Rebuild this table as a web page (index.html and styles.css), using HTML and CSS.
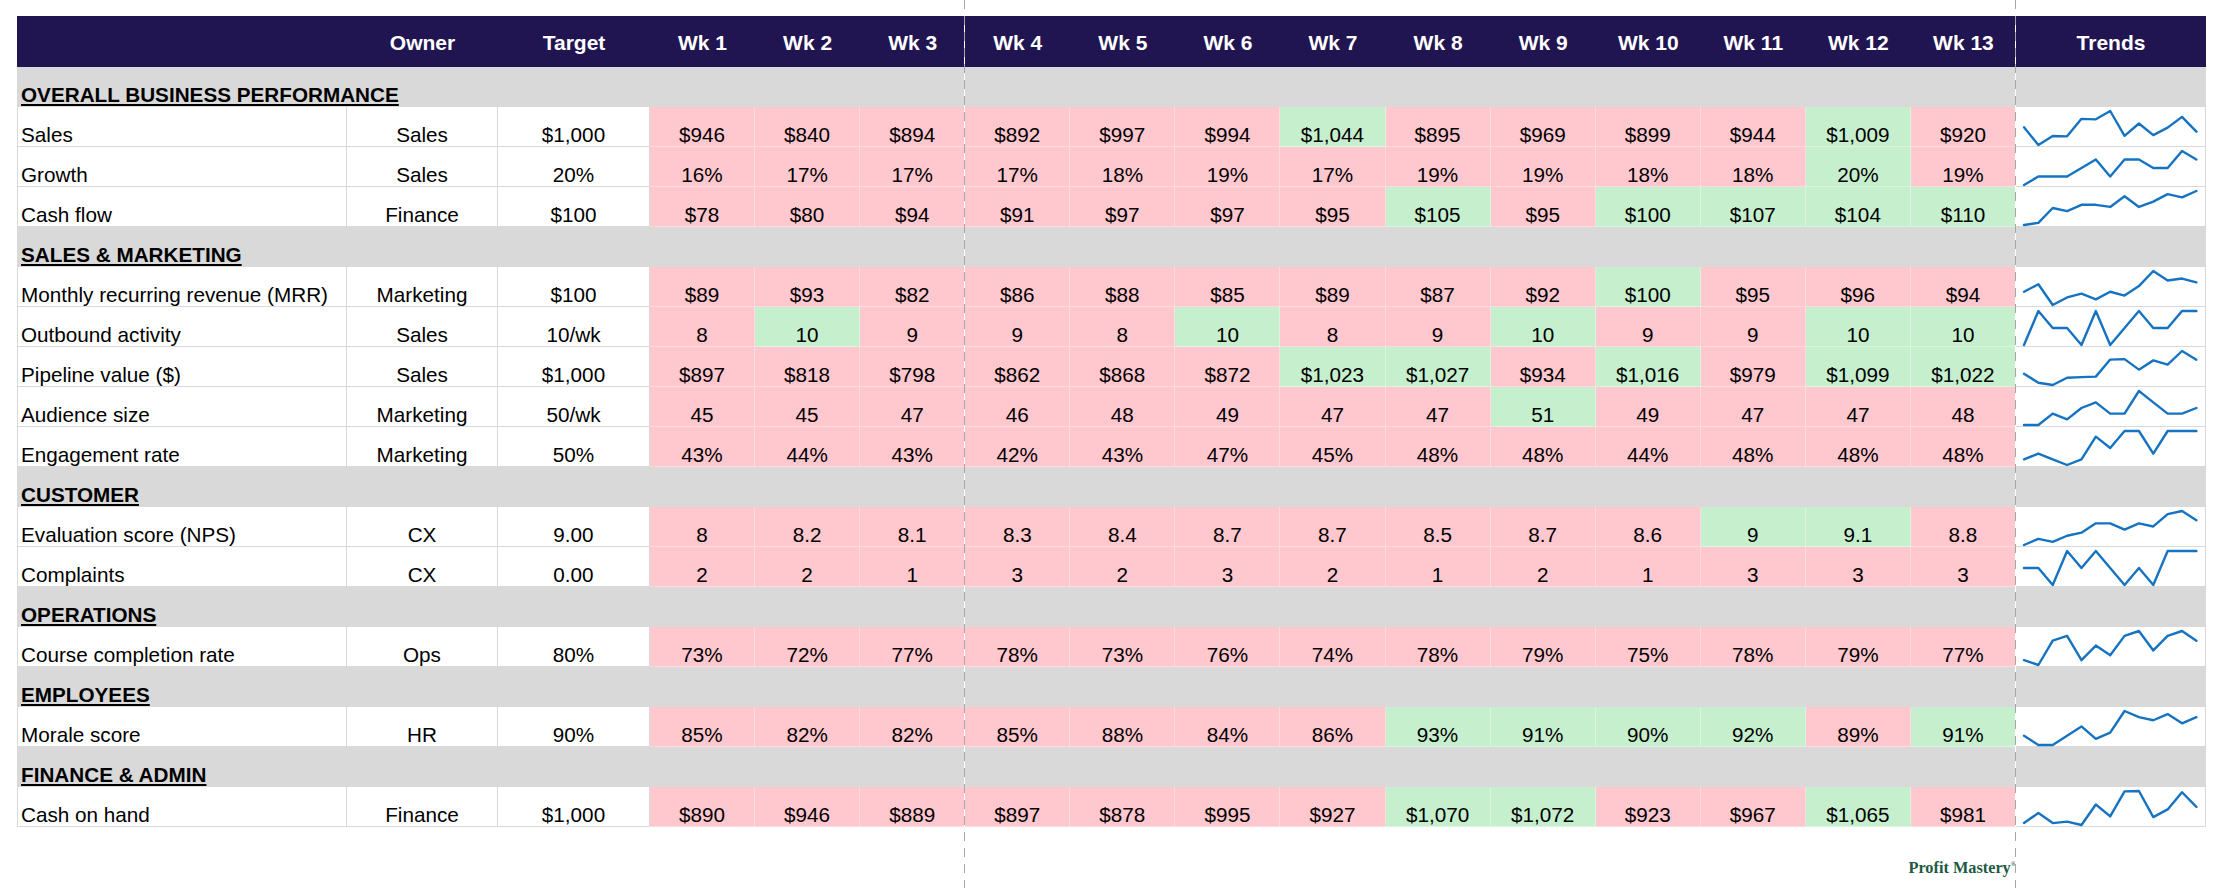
FILE: index.html
```html
<!DOCTYPE html>
<html lang="en">
<head>
<meta charset="utf-8">
<title>Weekly KPI Scorecard</title>
<link rel="stylesheet" href="styles.css">
</head>
<body>
<div class="page">
  <div class="sheet">
    <div class="row head">
      <div class="h"></div><div class="h">Owner</div><div class="h">Target</div>
      <div class="h">Wk 1</div><div class="h">Wk 2</div><div class="h">Wk 3</div><div class="h">Wk 4</div><div class="h">Wk 5</div><div class="h">Wk 6</div><div class="h">Wk 7</div><div class="h">Wk 8</div><div class="h">Wk 9</div><div class="h">Wk 10</div><div class="h">Wk 11</div><div class="h">Wk 12</div><div class="h">Wk 13</div>
      <div class="h">Trends</div>
    </div>

    <div class="section"><span class="section-title">OVERALL BUSINESS PERFORMANCE</span></div>
    <div class="row">
      <div class="c label">Sales</div><div class="c">Sales</div><div class="c">$1,000</div>
      <div class="c bad">$946</div><div class="c bad">$840</div><div class="c bad">$894</div><div class="c bad">$892</div><div class="c bad">$997</div><div class="c bad">$994</div><div class="c good">$1,044</div><div class="c bad">$895</div><div class="c bad">$969</div><div class="c bad">$899</div><div class="c bad">$944</div><div class="c good">$1,009</div><div class="c bad">$920</div>
      <div class="c trend"><svg class="spark" viewBox="0 -1044 12 204" preserveAspectRatio="none"><polyline points="0,-946 1,-840 2,-894 3,-892 4,-997 5,-994 6,-1044 7,-895 8,-969 9,-899 10,-944 11,-1009 12,-920"/></svg></div>
    </div>
    <div class="row">
      <div class="c label">Growth</div><div class="c">Sales</div><div class="c">20%</div>
      <div class="c bad">16%</div><div class="c bad">17%</div><div class="c bad">17%</div><div class="c bad">17%</div><div class="c bad">18%</div><div class="c bad">19%</div><div class="c bad">17%</div><div class="c bad">19%</div><div class="c bad">19%</div><div class="c bad">18%</div><div class="c bad">18%</div><div class="c good">20%</div><div class="c bad">19%</div>
      <div class="c trend"><svg class="spark" viewBox="0 -20 12 4" preserveAspectRatio="none"><polyline points="0,-16 1,-17 2,-17 3,-17 4,-18 5,-19 6,-17 7,-19 8,-19 9,-18 10,-18 11,-20 12,-19"/></svg></div>
    </div>
    <div class="row">
      <div class="c label">Cash flow</div><div class="c">Finance</div><div class="c">$100</div>
      <div class="c bad">$78</div><div class="c bad">$80</div><div class="c bad">$94</div><div class="c bad">$91</div><div class="c bad">$97</div><div class="c bad">$97</div><div class="c bad">$95</div><div class="c good">$105</div><div class="c bad">$95</div><div class="c good">$100</div><div class="c good">$107</div><div class="c good">$104</div><div class="c good">$110</div>
      <div class="c trend"><svg class="spark" viewBox="0 -110 12 32" preserveAspectRatio="none"><polyline points="0,-78 1,-80 2,-94 3,-91 4,-97 5,-97 6,-95 7,-105 8,-95 9,-100 10,-107 11,-104 12,-110"/></svg></div>
    </div>

    <div class="section"><span class="section-title">SALES &amp; MARKETING</span></div>
    <div class="row">
      <div class="c label">Monthly recurring revenue (MRR)</div><div class="c">Marketing</div><div class="c">$100</div>
      <div class="c bad">$89</div><div class="c bad">$93</div><div class="c bad">$82</div><div class="c bad">$86</div><div class="c bad">$88</div><div class="c bad">$85</div><div class="c bad">$89</div><div class="c bad">$87</div><div class="c bad">$92</div><div class="c good">$100</div><div class="c bad">$95</div><div class="c bad">$96</div><div class="c bad">$94</div>
      <div class="c trend"><svg class="spark" viewBox="0 -100 12 18" preserveAspectRatio="none"><polyline points="0,-89 1,-93 2,-82 3,-86 4,-88 5,-85 6,-89 7,-87 8,-92 9,-100 10,-95 11,-96 12,-94"/></svg></div>
    </div>
    <div class="row">
      <div class="c label">Outbound activity</div><div class="c">Sales</div><div class="c">10/wk</div>
      <div class="c bad">8</div><div class="c good">10</div><div class="c bad">9</div><div class="c bad">9</div><div class="c bad">8</div><div class="c good">10</div><div class="c bad">8</div><div class="c bad">9</div><div class="c good">10</div><div class="c bad">9</div><div class="c bad">9</div><div class="c good">10</div><div class="c good">10</div>
      <div class="c trend"><svg class="spark" viewBox="0 -10 12 2" preserveAspectRatio="none"><polyline points="0,-8 1,-10 2,-9 3,-9 4,-8 5,-10 6,-8 7,-9 8,-10 9,-9 10,-9 11,-10 12,-10"/></svg></div>
    </div>
    <div class="row">
      <div class="c label">Pipeline value ($)</div><div class="c">Sales</div><div class="c">$1,000</div>
      <div class="c bad">$897</div><div class="c bad">$818</div><div class="c bad">$798</div><div class="c bad">$862</div><div class="c bad">$868</div><div class="c bad">$872</div><div class="c good">$1,023</div><div class="c good">$1,027</div><div class="c bad">$934</div><div class="c good">$1,016</div><div class="c bad">$979</div><div class="c good">$1,099</div><div class="c good">$1,022</div>
      <div class="c trend"><svg class="spark" viewBox="0 -1099 12 301" preserveAspectRatio="none"><polyline points="0,-897 1,-818 2,-798 3,-862 4,-868 5,-872 6,-1023 7,-1027 8,-934 9,-1016 10,-979 11,-1099 12,-1022"/></svg></div>
    </div>
    <div class="row">
      <div class="c label">Audience size</div><div class="c">Marketing</div><div class="c">50/wk</div>
      <div class="c bad">45</div><div class="c bad">45</div><div class="c bad">47</div><div class="c bad">46</div><div class="c bad">48</div><div class="c bad">49</div><div class="c bad">47</div><div class="c bad">47</div><div class="c good">51</div><div class="c bad">49</div><div class="c bad">47</div><div class="c bad">47</div><div class="c bad">48</div>
      <div class="c trend"><svg class="spark" viewBox="0 -51 12 6" preserveAspectRatio="none"><polyline points="0,-45 1,-45 2,-47 3,-46 4,-48 5,-49 6,-47 7,-47 8,-51 9,-49 10,-47 11,-47 12,-48"/></svg></div>
    </div>
    <div class="row">
      <div class="c label">Engagement rate</div><div class="c">Marketing</div><div class="c">50%</div>
      <div class="c bad">43%</div><div class="c bad">44%</div><div class="c bad">43%</div><div class="c bad">42%</div><div class="c bad">43%</div><div class="c bad">47%</div><div class="c bad">45%</div><div class="c bad">48%</div><div class="c bad">48%</div><div class="c bad">44%</div><div class="c bad">48%</div><div class="c bad">48%</div><div class="c bad">48%</div>
      <div class="c trend"><svg class="spark" viewBox="0 -48 12 6" preserveAspectRatio="none"><polyline points="0,-43 1,-44 2,-43 3,-42 4,-43 5,-47 6,-45 7,-48 8,-48 9,-44 10,-48 11,-48 12,-48"/></svg></div>
    </div>

    <div class="section"><span class="section-title">CUSTOMER</span></div>
    <div class="row">
      <div class="c label">Evaluation score (NPS)</div><div class="c">CX</div><div class="c">9.00</div>
      <div class="c bad">8</div><div class="c bad">8.2</div><div class="c bad">8.1</div><div class="c bad">8.3</div><div class="c bad">8.4</div><div class="c bad">8.7</div><div class="c bad">8.7</div><div class="c bad">8.5</div><div class="c bad">8.7</div><div class="c bad">8.6</div><div class="c good">9</div><div class="c good">9.1</div><div class="c bad">8.8</div>
      <div class="c trend"><svg class="spark" viewBox="0 -9.1 12 1.1" preserveAspectRatio="none"><polyline points="0,-8 1,-8.2 2,-8.1 3,-8.3 4,-8.4 5,-8.7 6,-8.7 7,-8.5 8,-8.7 9,-8.6 10,-9 11,-9.1 12,-8.8"/></svg></div>
    </div>
    <div class="row">
      <div class="c label">Complaints</div><div class="c">CX</div><div class="c">0.00</div>
      <div class="c bad">2</div><div class="c bad">2</div><div class="c bad">1</div><div class="c bad">3</div><div class="c bad">2</div><div class="c bad">3</div><div class="c bad">2</div><div class="c bad">1</div><div class="c bad">2</div><div class="c bad">1</div><div class="c bad">3</div><div class="c bad">3</div><div class="c bad">3</div>
      <div class="c trend"><svg class="spark" viewBox="0 -3 12 2" preserveAspectRatio="none"><polyline points="0,-2 1,-2 2,-1 3,-3 4,-2 5,-3 6,-2 7,-1 8,-2 9,-1 10,-3 11,-3 12,-3"/></svg></div>
    </div>

    <div class="section"><span class="section-title">OPERATIONS</span></div>
    <div class="row">
      <div class="c label">Course completion rate</div><div class="c">Ops</div><div class="c">80%</div>
      <div class="c bad">73%</div><div class="c bad">72%</div><div class="c bad">77%</div><div class="c bad">78%</div><div class="c bad">73%</div><div class="c bad">76%</div><div class="c bad">74%</div><div class="c bad">78%</div><div class="c bad">79%</div><div class="c bad">75%</div><div class="c bad">78%</div><div class="c bad">79%</div><div class="c bad">77%</div>
      <div class="c trend"><svg class="spark" viewBox="0 -79 12 7" preserveAspectRatio="none"><polyline points="0,-73 1,-72 2,-77 3,-78 4,-73 5,-76 6,-74 7,-78 8,-79 9,-75 10,-78 11,-79 12,-77"/></svg></div>
    </div>

    <div class="section"><span class="section-title">EMPLOYEES</span></div>
    <div class="row">
      <div class="c label">Morale score</div><div class="c">HR</div><div class="c">90%</div>
      <div class="c bad">85%</div><div class="c bad">82%</div><div class="c bad">82%</div><div class="c bad">85%</div><div class="c bad">88%</div><div class="c bad">84%</div><div class="c bad">86%</div><div class="c good">93%</div><div class="c good">91%</div><div class="c good">90%</div><div class="c good">92%</div><div class="c bad">89%</div><div class="c good">91%</div>
      <div class="c trend"><svg class="spark" viewBox="0 -93 12 11" preserveAspectRatio="none"><polyline points="0,-85 1,-82 2,-82 3,-85 4,-88 5,-84 6,-86 7,-93 8,-91 9,-90 10,-92 11,-89 12,-91"/></svg></div>
    </div>

    <div class="section"><span class="section-title">FINANCE &amp; ADMIN</span></div>
    <div class="row">
      <div class="c label">Cash on hand</div><div class="c">Finance</div><div class="c">$1,000</div>
      <div class="c bad">$890</div><div class="c bad">$946</div><div class="c bad">$889</div><div class="c bad">$897</div><div class="c bad">$878</div><div class="c bad">$995</div><div class="c bad">$927</div><div class="c good">$1,070</div><div class="c good">$1,072</div><div class="c bad">$923</div><div class="c bad">$967</div><div class="c good">$1,065</div><div class="c bad">$981</div>
      <div class="c trend"><svg class="spark" viewBox="0 -1072 12 194" preserveAspectRatio="none"><polyline points="0,-890 1,-946 2,-889 3,-897 4,-878 5,-995 6,-927 7,-1070 8,-1072 9,-923 10,-967 11,-1065 12,-981"/></svg></div>
    </div>
  </div>

  <div class="footer">
    <span class="logo">Profit Mastery<sup class="reg">®</sup></span>
  </div>

  <div class="pagebreak pb-a"></div>
  <div class="pagebreak pb-b"></div>
</div>
</body>
</html>
```

FILE: styles.css
```css
html, body {
  margin: 0;
  padding: 0;
  background: #ffffff;
}

body {
  font-family: "Liberation Sans", Arial, sans-serif;
  color: #000000;
}

.page {
  --cols: 330px 151px 152px repeat(13, 1fr) 190px;
  position: relative;
  box-sizing: border-box;
  width: 2220px;
  height: 888px;
  padding: 16px 0 0 17px;
  overflow: hidden;
}

.sheet {
  width: 2189px;
}

.row {
  display: grid;
  grid-template-columns: var(--cols);
  height: 40px;
}

.head {
  height: 51px;
  background: #211551;
  color: #ffffff;
  font-weight: bold;
  font-size: 21px;
}

.h {
  display: flex;
  align-items: center;
  justify-content: center;
  padding-top: 2px;
  line-height: 24px;
  white-space: nowrap;
}

.section {
  box-sizing: border-box;
  height: 40px;
  background: #d9d9d9;
  display: flex;
  align-items: flex-end;
  padding: 0 0 1.5px 4px;
  font-weight: bold;
  font-size: 20.7px;
  line-height: 22px;
}

.section-title {
  text-decoration: underline;
  text-decoration-thickness: 2px;
  text-underline-offset: 2px;
}

.c {
  box-sizing: border-box;
  display: flex;
  align-items: flex-end;
  justify-content: center;
  border-right: 1px solid #d9d9d9;
  border-bottom: 1px solid #d9d9d9;
  font-size: 20.7px;
  line-height: 22px;
  white-space: nowrap;
}

.label {
  justify-content: flex-start;
  padding-left: 3px;
  border-left: 1px solid #d9d9d9;
}

.bad {
  background: #ffc7ce;
  border-color: rgba(255, 255, 255, 0.35);
}

.good {
  background: #c6efce;
  border-color: rgba(255, 255, 255, 0.35);
}

.trend {
  align-items: flex-start;
  justify-content: flex-start;
  padding: 3.7px 0 0 8.3px;
}

.spark {
  display: block;
  width: 172.4px;
  height: 34px;
  overflow: visible;
}

.spark polyline {
  fill: none;
  stroke: #1573c2;
  stroke-width: 2.4px;
  stroke-linejoin: round;
  stroke-linecap: round;
  vector-effect: non-scaling-stroke;
}

.footer {
  display: grid;
  grid-template-columns: var(--cols);
  width: 2189px;
  margin-top: 31px;
}

.logo {
  grid-column: 16;
  font-family: "Liberation Serif", "Times New Roman", serif;
  font-weight: bold;
  font-size: 16.3px;
  line-height: 19px;
  color: #1d5a43;
  white-space: nowrap;
}

.reg {
  font-size: 7px;
  vertical-align: 7px;
  line-height: 0;
}

.pagebreak {
  position: absolute;
  top: 0;
  width: 1px;
  height: 888px;
  background: repeating-linear-gradient(to bottom, #a6a6a6 0 9px, #ffffff 9px 16px);
}

.pb-a {
  left: 964px;
}

.pb-b {
  left: 2015px;
}
```
